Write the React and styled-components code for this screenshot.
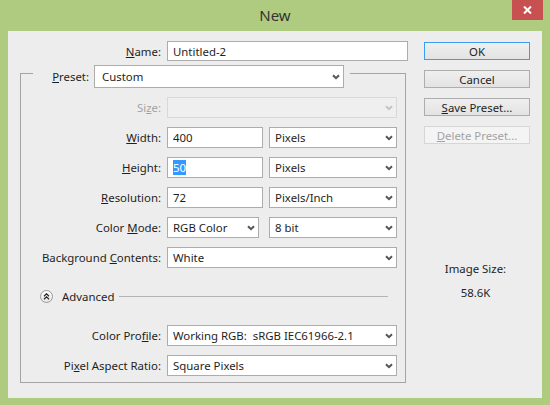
import React from 'react';
import styled, { createGlobalStyle } from 'styled-components';

const GlobalStyle = createGlobalStyle`
  html, body {
    margin: 0;
    padding: 0;
    background: #ffffff;
  }
  body {
    font-family: "Noto Sans", "DejaVu Sans", sans-serif;
    font-size: 11.4px;
    color: #1e1e1e;
  }
  * {
    box-sizing: border-box;
  }
`;

// Window frame
const Window = styled.div`
  width: 550px;
  height: 405px;
  background: #afcb80;
  display: flex;
  flex-direction: column;
`;

const TitleBar = styled.div`
  position: relative;
  height: 31px;
  display: flex;
  align-items: center;
  justify-content: center;
  font-size: 15px;
  color: #333333;
  padding-bottom: 1px;
`;

const CloseButton = styled.div`
  position: absolute;
  top: 0;
  right: 7px;
  width: 31px;
  height: 20px;
  background: #c75050;
  display: flex;
  align-items: center;
  justify-content: center;
`;

const Client = styled.div`
  flex: 1;
  margin: 0 8px 7px;
  background: #ededed;
  display: flex;
`;

const FormColumn = styled.div`
  width: 408px;
  padding-top: 10px;
  display: flex;
  flex-direction: column;
`;

const SideColumn = styled.div`
  width: 106px;
  margin-left: 8px;
  padding-top: 11px;
  display: flex;
  flex-direction: column;
  align-items: stretch;
`;

// Form rows
const NameRow = styled.div`
  display: flex;
  align-items: center;
  height: 20px;
`;

const Label = styled.div`
  width: ${p => p.width || 140}px;
  margin-right: ${p => (p.gap === undefined ? 6 : p.gap)}px;
  text-align: right;
  white-space: nowrap;
  color: ${p => (p.disabled ? '#a3a3a3' : '#1e1e1e')};
`;

const TextInput = styled.div`
  width: ${p => p.width}px;
  height: ${p => p.height || 21}px;
  background: #ffffff;
  border: 1px solid #acacac;
  padding-left: 5px;
  display: flex;
  align-items: center;
  white-space: nowrap;
`;

const Selected = styled.span`
  background: #3399ff;
  color: #ffffff;
`;

const SelectBox = styled.div`
  width: ${p => p.width}px;
  height: ${p => p.height || 21}px;
  background: ${p => (p.disabled ? '#efefef' : '#ffffff')};
  border: 1px solid ${p => (p.disabled ? '#d9d9d9' : '#acacac')};
  padding-left: ${p => p.pad || 5}px;
  padding-right: 3px;
  display: flex;
  align-items: center;
  justify-content: space-between;
  white-space: nowrap;
`;

const Chevron = ({ disabled }) => (
  <svg width="8" height="6" viewBox="0 0 8 6">
    <path
      d="M1 1.2 L4 4.2 L7 1.2"
      fill="none"
      stroke={disabled ? '#c4c4c4' : '#555555'}
      strokeWidth="2"
    />
  </svg>
);

const Select = ({ width, height, pad, disabled, children }) => (
  <SelectBox width={width} height={height} pad={pad} disabled={disabled}>
    <span>{children}</span>
    <Chevron disabled={disabled} />
  </SelectBox>
);

// Group box
const GroupBox = styled.div`
  margin-top: 4px;
  margin-left: 12px;
  width: 386px;
  display: flex;
  flex-direction: column;
`;

const GroupHeader = styled.div`
  display: flex;
  height: 23px;
  align-items: center;
`;

const HeaderEdgeLeft = styled.div`
  align-self: stretch;
  width: 13px;
  margin-top: 8px;
  border-top: 1px solid #a5a5a5;
  border-left: 1px solid #a5a5a5;
`;

const HeaderEdgeRight = styled.div`
  align-self: stretch;
  flex: 1;
  margin-top: 8px;
  margin-left: 6px;
  border-top: 1px solid #a5a5a5;
  border-right: 1px solid #a5a5a5;
`;

const GroupBody = styled.div`
  border: 1px solid #a5a5a5;
  border-top: none;
  padding: 9px 8px 6px 0;
  display: flex;
  flex-direction: column;
  gap: 9px;
`;

const Row = styled.div`
  display: flex;
  align-items: center;
  height: 21px;
`;

const Fields = styled.div`
  display: flex;
  gap: ${p => p.gap || 6}px;
`;

const AdvancedRow = styled.div`
  display: flex;
  align-items: center;
  height: 20px;
  margin: 9px 0 10px 19px;
`;

const RoundToggle = styled.div`
  width: 13px;
  height: 13px;
  border-radius: 50%;
  border: 1px solid #9a9a9a;
  background: linear-gradient(#ffffff, #e6e6e6);
  display: flex;
  align-items: center;
  justify-content: center;
  margin-right: 9px;
`;

const Rule = styled.div`
  flex: 1;
  height: 1px;
  background: #b4b4b4;
  margin: 1px 9px 0 5px;
`;

// Buttons
const Button = styled.div`
  height: 18px;
  margin-bottom: 10px;
  display: flex;
  align-items: center;
  justify-content: center;
  background: ${p => (p.disabled ? '#f4f4f4' : 'linear-gradient(#efefef, #e3e3e3)')};
  border: 1px solid ${p => (p.primary ? '#3c9cf0' : p.disabled ? '#d6d6d6' : '#adadad')};
  color: ${p => (p.disabled ? '#a3a3a3' : '#1e1e1e')};
  white-space: nowrap;
`;

const InfoText = styled.div`
  text-align: center;
  line-height: 16px;
  margin-top: ${p => p.top || 0}px;
  padding-right: 3px;
`;

export default function App() {
  return (
    <>
      <GlobalStyle />
      <Window>
        <TitleBar>
          New
          <CloseButton>
            <svg width="9" height="8" viewBox="0 0 9 8">
              <path d="M1 0.5 L8 7.5 M8 0.5 L1 7.5" stroke="#ffffff" strokeWidth="2" />
            </svg>
          </CloseButton>
        </TitleBar>
        <Client>
          <FormColumn>
            <NameRow>
              <Label width={153}><u>N</u>ame:</Label>
              <TextInput width={241} height={20}>Untitled-2</TextInput>
            </NameRow>

            <GroupBox>
              <GroupHeader>
                <HeaderEdgeLeft />
                <Label width={56} gap={5}><u>P</u>reset:</Label>
                <Select width={250} height={23} pad={7}>Custom</Select>
                <HeaderEdgeRight />
              </GroupHeader>
              <GroupBody>
                <Row>
                  <Label disabled>Si<u>z</u>e:</Label>
                  <Select width={230} disabled />
                </Row>
                <Row>
                  <Label><u>W</u>idth:</Label>
                  <Fields>
                    <TextInput width={96}>400</TextInput>
                    <Select width={128}>Pixels</Select>
                  </Fields>
                </Row>
                <Row>
                  <Label><u>H</u>eight:</Label>
                  <Fields>
                    <TextInput width={96}><Selected>50</Selected></TextInput>
                    <Select width={128}>Pixels</Select>
                  </Fields>
                </Row>
                <Row>
                  <Label><u>R</u>esolution:</Label>
                  <Fields>
                    <TextInput width={96}>72</TextInput>
                    <Select width={128}>Pixels/Inch</Select>
                  </Fields>
                </Row>
                <Row>
                  <Label>Color <u>M</u>ode:</Label>
                  <Fields gap={10}>
                    <Select width={92}>RGB Color</Select>
                    <Select width={128}>8 bit</Select>
                  </Fields>
                </Row>
                <Row>
                  <Label>Background <u>C</u>ontents:</Label>
                  <Select width={230}>White</Select>
                </Row>

                <AdvancedRow>
                  <RoundToggle>
                    <svg width="7" height="7" viewBox="0 0 7 7">
                      <path d="M1 3.2 L3.5 0.8 L6 3.2 M1 6.2 L3.5 3.8 L6 6.2" fill="none" stroke="#222222" strokeWidth="1.2" />
                    </svg>
                  </RoundToggle>
                  Advanced
                  <Rule />
                </AdvancedRow>

                <Row>
                  <Label>Color Pro<u>f</u>ile:</Label>
                  <Select width={230}>Working RGB:&nbsp; sRGB IEC61966-2.1</Select>
                </Row>
                <Row>
                  <Label>Pi<u>x</u>el Aspect Ratio:</Label>
                  <Select width={230}>Square Pixels</Select>
                </Row>
              </GroupBody>
            </GroupBox>
          </FormColumn>

          <SideColumn>
            <Button primary>OK</Button>
            <Button>Cancel</Button>
            <Button><u>S</u>ave Preset...</Button>
            <Button disabled><u>D</u>elete Preset...</Button>
            <InfoText top={107}>Image Size:</InfoText>
            <InfoText top={8}>58.6K</InfoText>
          </SideColumn>
        </Client>
      </Window>
    </>
  );
}
